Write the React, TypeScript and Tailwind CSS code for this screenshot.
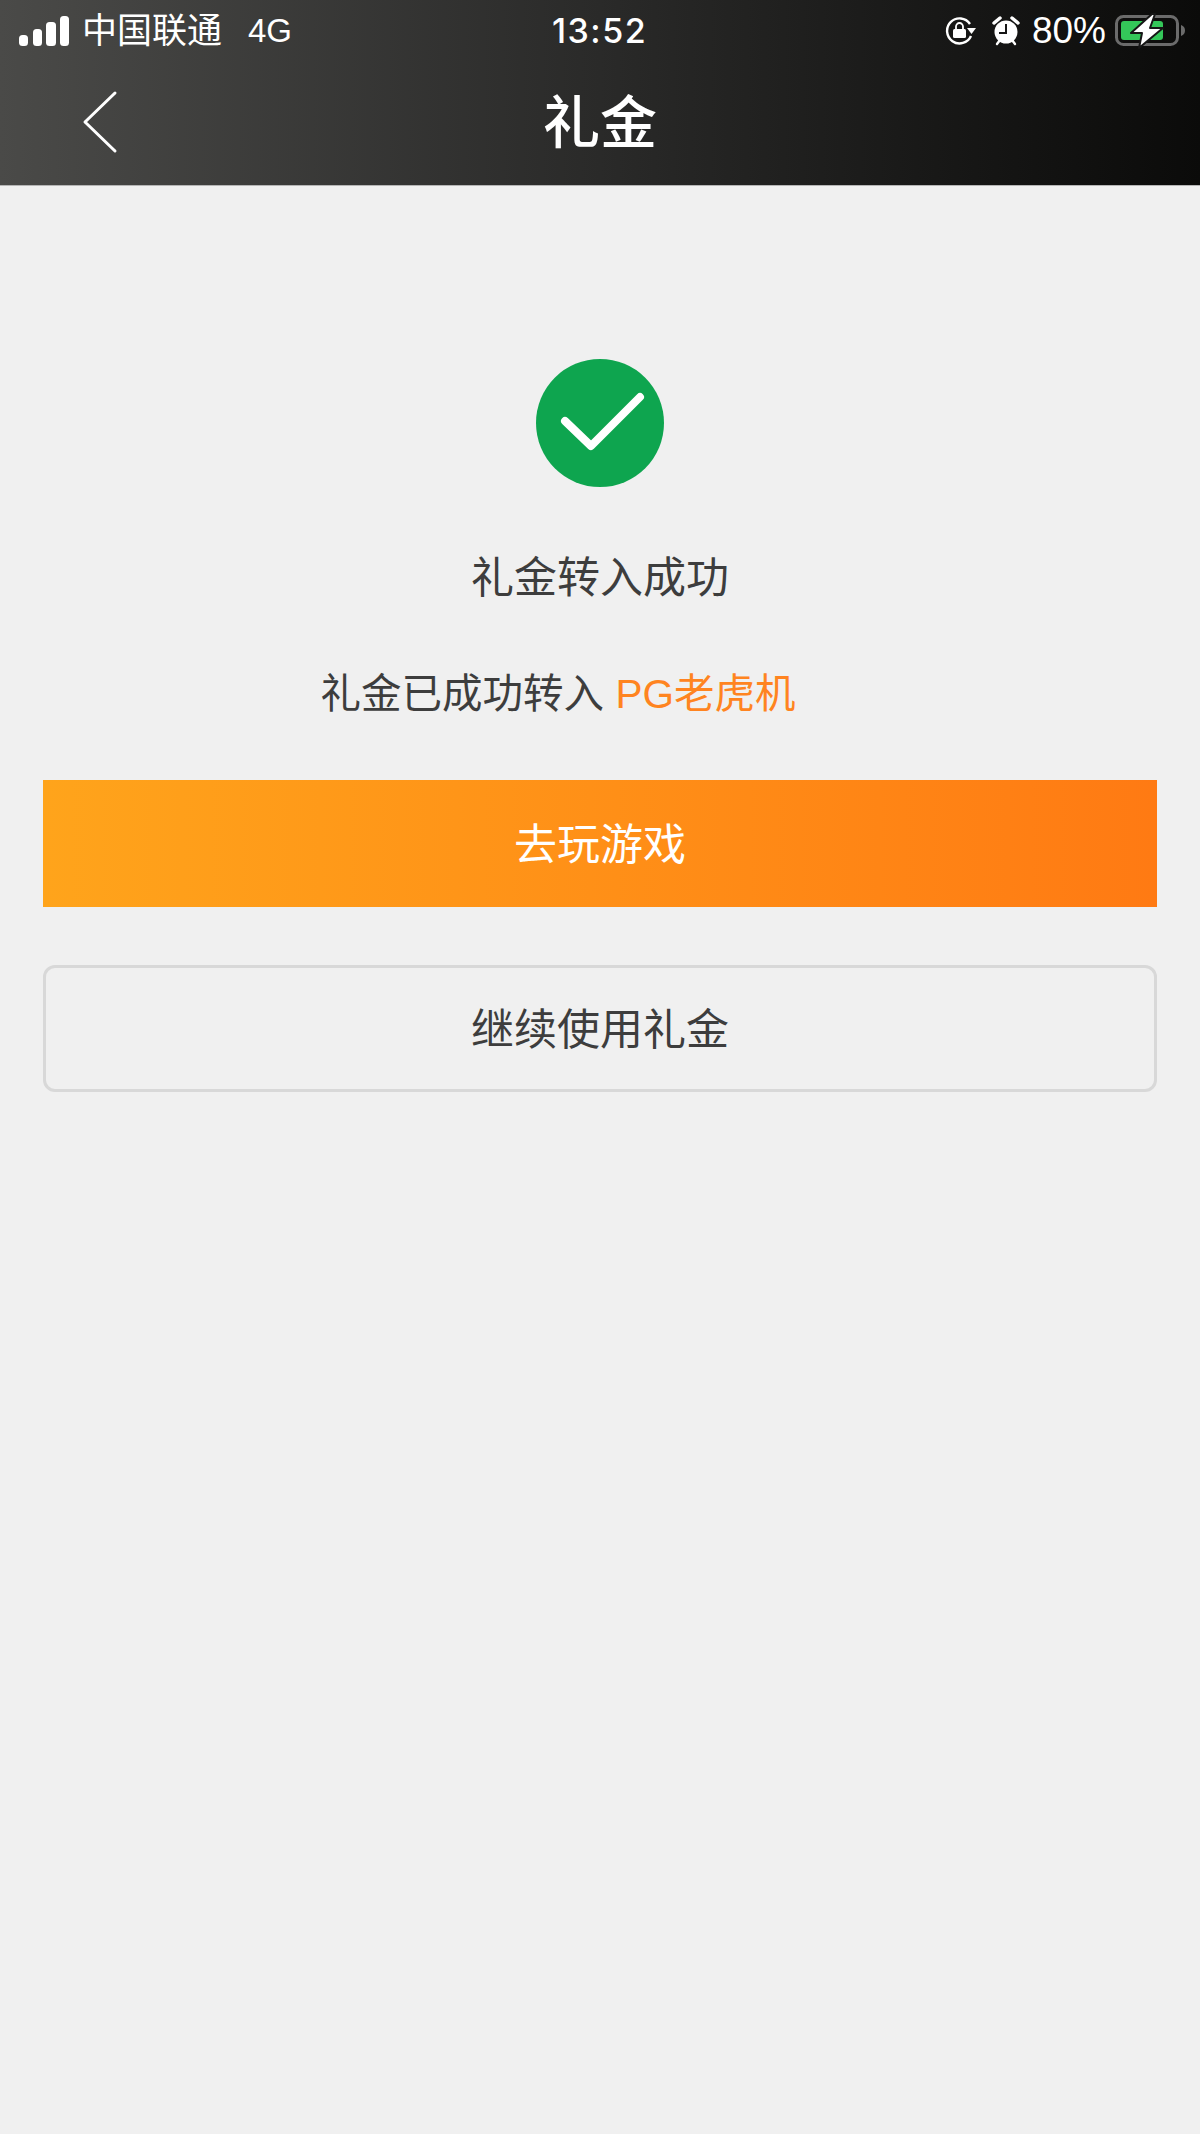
const cjk = "font-['Liberation_Sans','Noto_Sans_CJK_SC',sans-serif]";

function SignalBars() {
  return (
    <svg width="50" height="30" viewBox="0 0 50 30" fill="white" aria-hidden="true">
      <rect x="0" y="19" width="9" height="11" rx="3.5" />
      <rect x="14" y="13" width="9" height="17" rx="3.5" />
      <rect x="27" y="6" width="10" height="24" rx="3.5" />
      <rect x="41" y="0" width="9" height="30" rx="3.5" />
    </svg>
  );
}

function RotationLock() {
  return (
    <svg width="32" height="28" viewBox="0 0 32 28" fill="none" aria-hidden="true">
      <path d="M26 19a12.5 12.5 0 1 1-1-12" stroke="white" strokeWidth="2.4" />
      <path d="M22 11h9l-4.500 6z" fill="white" />
      <rect x="8" y="12" width="13" height="9" rx="1.500" fill="white" />
      <path d="M11 12V9.500a3.500 3.500 0 0 1 7 0V12" stroke="white" strokeWidth="1.800" />
    </svg>
  );
}

function AlarmClock() {
  return (
    <svg width="28" height="30" viewBox="0 0 28 30" fill="none" aria-hidden="true">
      <circle cx="14" cy="16" r="11.500" fill="white" />
      <path d="M14 8v9H7" stroke="#161616" strokeWidth="2" />
      <path d="M2 7l6-5M26 7l-6-5" stroke="white" strokeWidth="3.500" strokeLinecap="round" />
      <path d="M5 28l3-4M23 28l-3-4" stroke="white" strokeWidth="2.400" strokeLinecap="round" />
    </svg>
  );
}

function ChargingBattery() {
  return (
    <svg width="72" height="36" viewBox="0 0 72 36" fill="none" aria-hidden="true">
      <rect x="2.500" y="3.500" width="61" height="28" rx="7" stroke="#6b6b6b" strokeWidth="3" />
      <path d="M67 12c3 1 4 3 4 5.500s-1 4.500-4 5.500z" fill="#6b6b6b" />
      <rect x="7" y="8" width="42" height="19" rx="3" fill="#34c759" />
      <path d="M38 1 L17 20 H28 L25 35 L49 15 H36 L41 1 Z" fill="white" stroke="#161616" strokeWidth="2" strokeLinejoin="round" />
    </svg>
  );
}

export default function App() {
  return (
    <div className={`${cjk} flex min-h-[2134px] w-[1200px] flex-col bg-[#f0f0f0]`}>
      {/* Header with status bar */}
      <header className="h-[186px] bg-gradient-to-r from-[#4a4a48] via-[#2a2a29] to-[#0b0b0a] border-b border-[#b5b5b5] text-white">
        <div className="flex h-[61px] items-center justify-between pl-[19px] pr-[14px]">
          <div className="flex w-[400px] items-center">
            <SignalBars />
            <span className="ml-[13px] text-[35px] leading-none">中国联通</span>
            <span className="ml-[26px] text-[33px] leading-none">4G</span>
          </div>
          <span className="mr-[6px] font-['Inter',sans-serif] text-[34px] font-medium leading-none tracking-[1.5px]">13:52</span>
          <div className="flex w-[400px] items-center justify-end">
            <RotationLock />
            <span className="ml-[15px]"><AlarmClock /></span>
            <span className="ml-[12px] text-[37px] leading-none">80%</span>
            <span className="ml-[8px]"><ChargingBattery /></span>
          </div>
        </div>
        <div className="relative flex h-[124px] items-center justify-center">
          <svg className="absolute left-[81px] top-[28px]" width="38" height="66" viewBox="0 0 38 66" fill="none" aria-hidden="true">
            <path d="M34 4 L4 33 L34 62" stroke="white" strokeWidth="3" strokeLinecap="round" strokeLinejoin="round" />
          </svg>
          <h1 className="text-[57px] font-medium leading-none">礼金</h1>
        </div>
      </header>

      <main className="flex flex-col items-center px-[43px] pt-[173px]">
        <svg width="128" height="128" viewBox="0 0 128 128" aria-hidden="true">
          <circle cx="64" cy="64" r="64" fill="#0ea54f" />
          <path d="M29 62 L55 87 L104 38" fill="none" stroke="white" strokeWidth="8" strokeLinecap="round" strokeLinejoin="round" />
        </svg>
        <p className="mt-[70px] text-[43px] leading-none text-[#3d3d3d]">礼金转入成功</p>
        <p className="mt-[74px] mr-[84px] text-[40.5px] leading-none text-[#3d3d3d]">
          礼金已成功转入 <span className="text-[#ff8420]">PG老虎机</span>
        </p>
        <button className="mt-[65px] flex h-[127px] w-full items-center justify-center bg-gradient-to-r from-[#ffa41b] to-[#ff7a13] pt-[4px] text-[43px] text-white">
          去玩游戏
        </button>
        <button className="mt-[58px] flex h-[127px] w-full items-center justify-center rounded-[12px] border-[3px] border-[#d8d8d8] pt-[5px] text-[43px] text-[#3d3d3d]">
          继续使用礼金
        </button>
      </main>
    </div>
  );
}
